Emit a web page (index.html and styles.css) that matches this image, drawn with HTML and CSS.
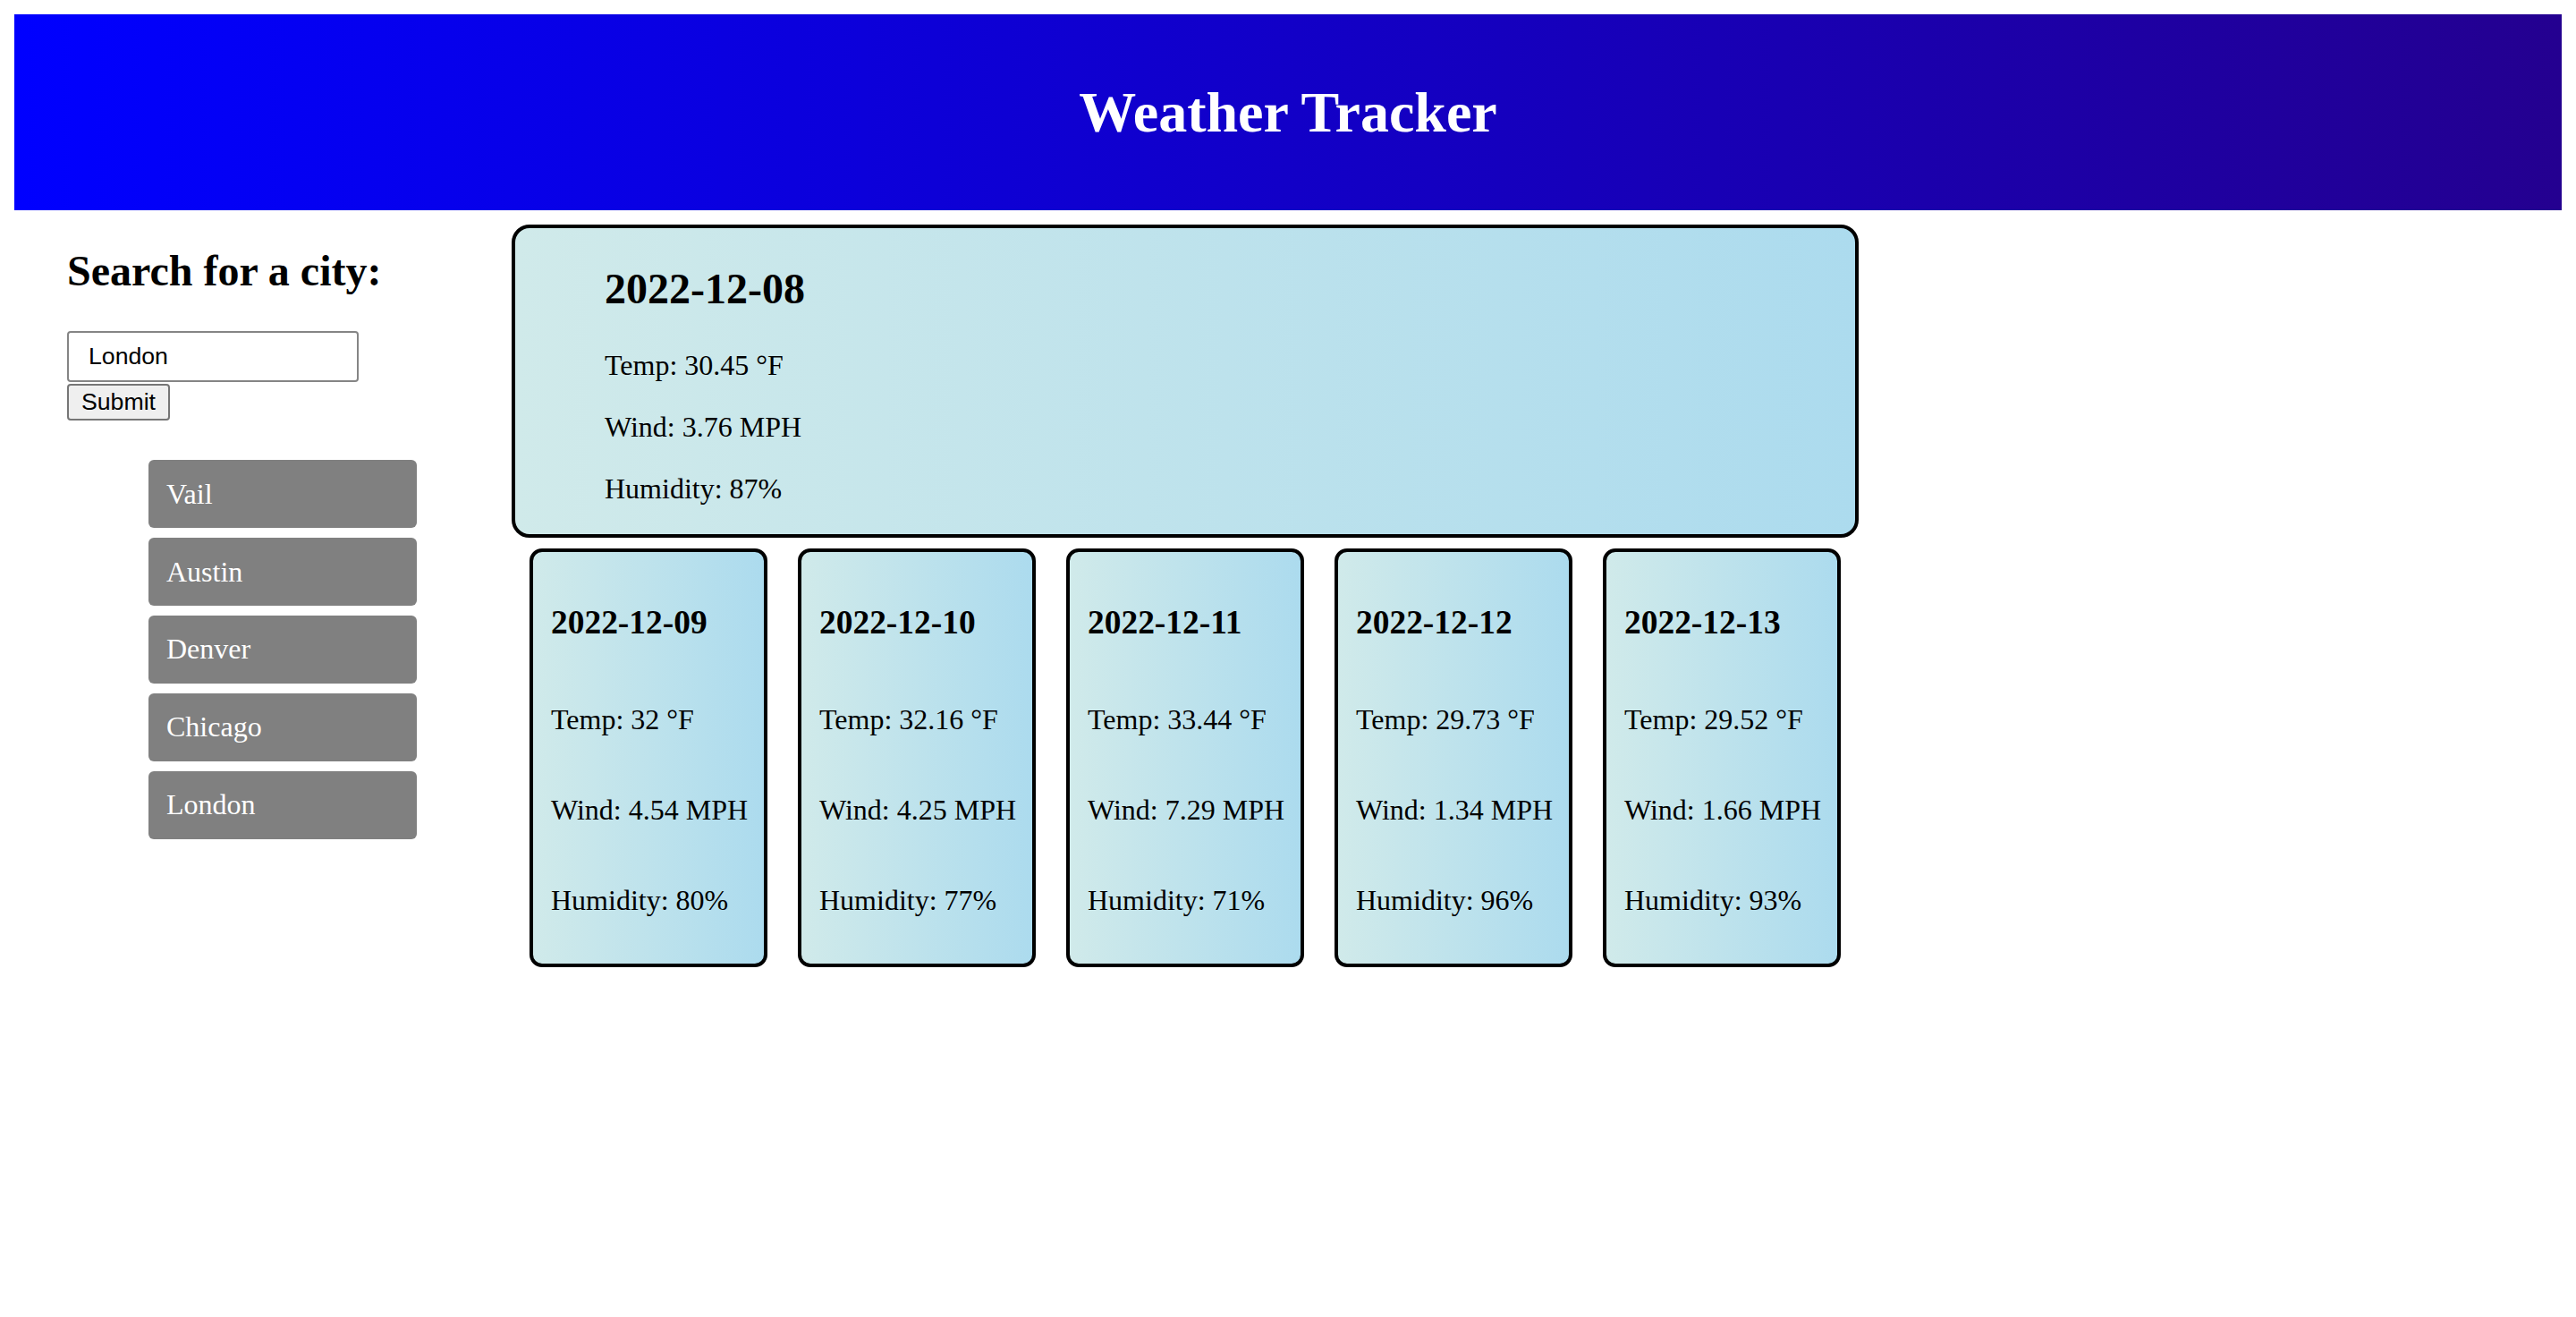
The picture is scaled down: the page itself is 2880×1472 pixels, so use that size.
FILE: index.html
```html
<!DOCTYPE html>
<html lang="en">
<head>
<meta charset="utf-8">
<title>Weather Tracker</title>
<link rel="stylesheet" href="styles.css">
</head>
<body>
<header class="site-header">
  <h1 class="site-title">Weather Tracker</h1>
</header>
<div class="layout">
  <aside class="sidebar">
    <h2 class="search-title">Search for a city:</h2>
    <form class="search-form">
      <input class="search-input" type="text" value="London">
      <button class="submit-btn" type="button">Submit</button>
    </form>
    <div class="history">
      <button class="city-btn" type="button">Vail</button>
      <button class="city-btn" type="button">Austin</button>
      <button class="city-btn" type="button">Denver</button>
      <button class="city-btn" type="button">Chicago</button>
      <button class="city-btn" type="button">London</button>
    </div>
  </aside>
  <main class="content">
    <section class="today">
      <h2 class="today-date">2022-12-08</h2>
      <p class="stat">Temp: 30.45 °F</p>
      <p class="stat">Wind: 3.76 MPH</p>
      <p class="stat">Humidity: 87%</p>
    </section>
    <section class="forecast">
      <div class="day">
        <h3 class="day-date">2022-12-09</h3>
        <p class="stat">Temp: 32 °F</p>
        <p class="stat">Wind: 4.54 MPH</p>
        <p class="stat">Humidity: 80%</p>
      </div>
      <div class="day">
        <h3 class="day-date">2022-12-10</h3>
        <p class="stat">Temp: 32.16 °F</p>
        <p class="stat">Wind: 4.25 MPH</p>
        <p class="stat">Humidity: 77%</p>
      </div>
      <div class="day">
        <h3 class="day-date">2022-12-11</h3>
        <p class="stat">Temp: 33.44 °F</p>
        <p class="stat">Wind: 7.29 MPH</p>
        <p class="stat">Humidity: 71%</p>
      </div>
      <div class="day">
        <h3 class="day-date">2022-12-12</h3>
        <p class="stat">Temp: 29.73 °F</p>
        <p class="stat">Wind: 1.34 MPH</p>
        <p class="stat">Humidity: 96%</p>
      </div>
      <div class="day">
        <h3 class="day-date">2022-12-13</h3>
        <p class="stat">Temp: 29.52 °F</p>
        <p class="stat">Wind: 1.66 MPH</p>
        <p class="stat">Humidity: 93%</p>
      </div>
    </section>
  </main>
</div>
</body>
</html>
```

FILE: styles.css
```css
html, body {
  background: #ffffff;
}

body {
  margin: 16px;
  font-family: "Liberation Serif", "Times New Roman", serif;
  font-size: 32px;
  line-height: 1.15;
  color: #000;
}

.site-header {
  background: linear-gradient(to right, #0000ff, #240090);
  padding: 30px 0;
  text-align: center;
}

.site-title {
  margin: 42.9px 0;
  font-size: 64px;
  font-weight: bold;
  color: #ffffff;
}

.layout {
  display: flex;
  align-items: flex-start;
}

.sidebar {
  box-sizing: border-box;
  width: 556px;
  padding-left: 59px;
  flex: none;
}

.search-title {
  margin: 39.8px 0;
  font-size: 48px;
  font-weight: bold;
}

.search-form {
  display: flex;
  flex-direction: column;
  align-items: flex-start;
  gap: 2px;
}

.search-input {
  box-sizing: border-box;
  width: 326px;
  height: 57px;
  margin: 0;
  padding: 0 22px;
  border: 2px solid #858585;
  border-radius: 4px;
  font-family: "Liberation Sans", Arial, sans-serif;
  font-size: 26.67px;
  color: #000;
  background: #fff;
}

.submit-btn {
  box-sizing: border-box;
  height: 41px;
  margin: 0;
  padding: 0 14px;
  border: 2px solid #767676;
  border-radius: 4px;
  background: #efefef;
  font-family: "Liberation Sans", Arial, sans-serif;
  font-size: 26.67px;
  color: #000;
  line-height: 1;
}

.history {
  display: flex;
  flex-direction: column;
  gap: 11.4px;
  margin: 44px 0 0 91px;
}

.city-btn {
  box-sizing: border-box;
  width: 300px;
  margin: 0;
  padding: 19.4px 20px;
  border: none;
  border-radius: 6px;
  background: #808080;
  color: #ffffff;
  font-family: "Liberation Serif", "Times New Roman", serif;
  font-size: 32px;
  line-height: 1.15;
  text-align: left;
}

.content {
  width: 1506px;
  margin-top: 16px;
  flex: none;
}

.today {
  border: 4px solid #000;
  border-radius: 20px;
  padding: 0 0 0 100px;
  background: linear-gradient(to right, #d0eaea, #acdbee);
}

.today-date {
  margin: 39.8px 0;
  font-size: 48px;
  font-weight: bold;
}

.stat {
  margin: 32px 0;
  font-size: 32px;
  white-space: nowrap;
}

.forecast {
  display: flex;
  justify-content: space-between;
  padding: 0 20px;
  margin-top: 12px;
}

.day {
  box-sizing: border-box;
  width: 266px;
  display: flex;
  flex-direction: column;
  padding: 20px;
  border: 4px solid #000;
  border-radius: 14px;
  background: linear-gradient(to right, #d0eaea, #acdbee);
}

.day-date {
  margin: 37.44px 0;
  font-size: 37.44px;
  font-weight: bold;
}
```
